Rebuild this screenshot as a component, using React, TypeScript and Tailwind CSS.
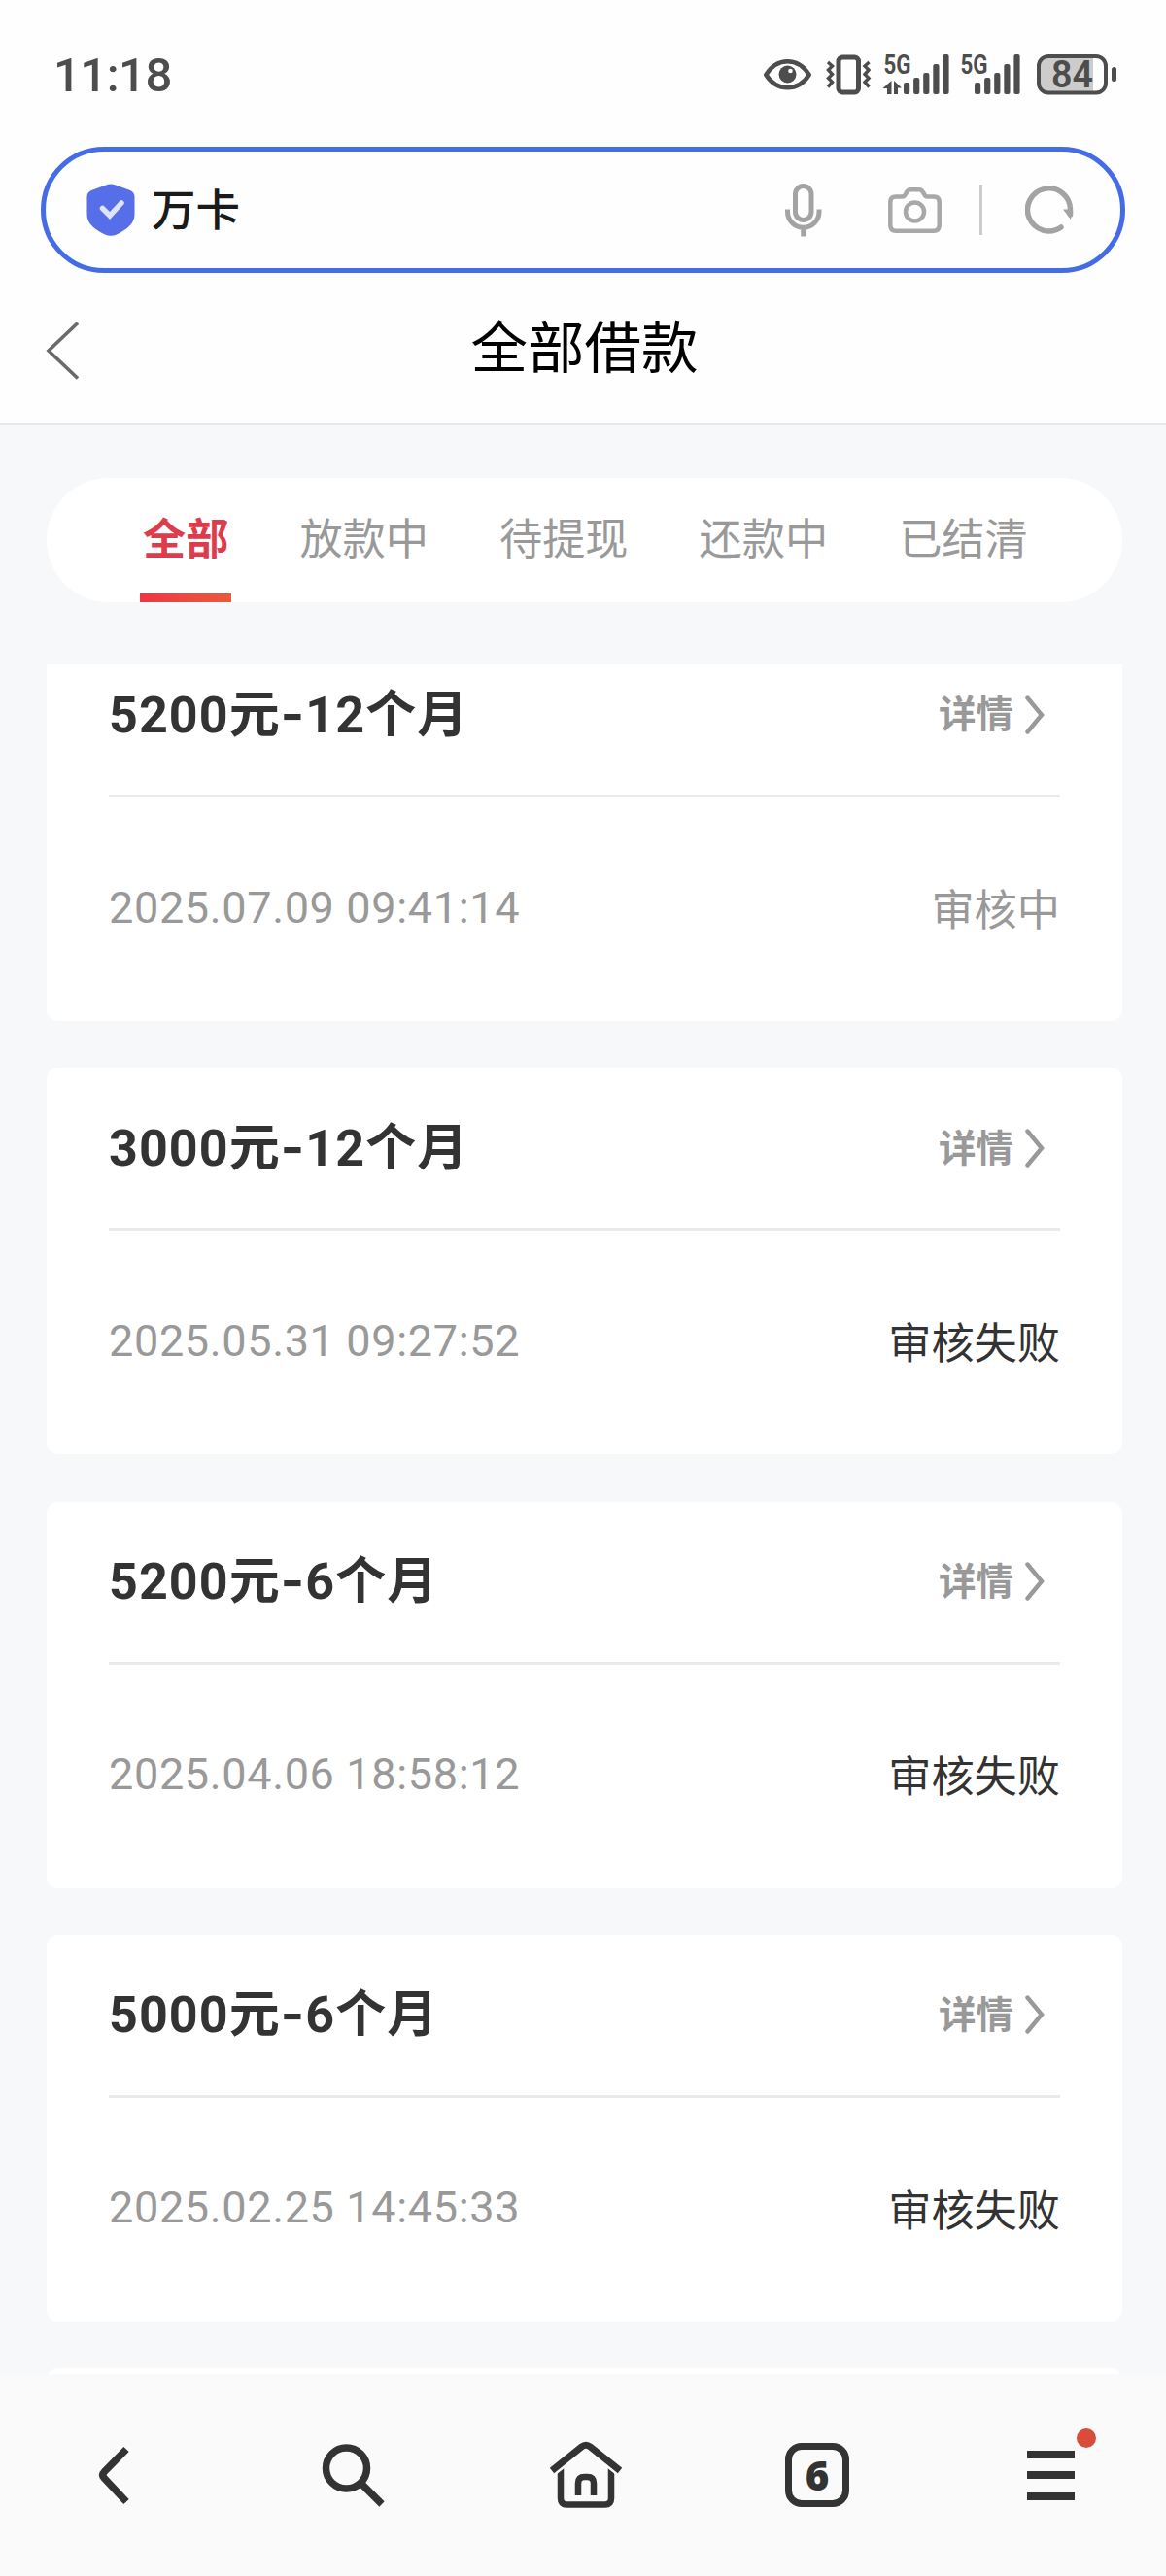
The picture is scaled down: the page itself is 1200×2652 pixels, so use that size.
import React from 'react'

type Loan = {
  amount: string
  months: string
  time: string
  status: string
  pending?: boolean
}

const tabs = ['全部', '放款中', '待提现', '还款中', '已结清']

const loans: Loan[] = [
  { amount: '5200元', months: '12个月', time: '2025.07.09 09:41:14', status: '审核中', pending: true },
  { amount: '3000元', months: '12个月', time: '2025.05.31 09:27:52', status: '审核失败' },
  { amount: '5200元', months: '6个月', time: '2025.04.06 18:58:12', status: '审核失败' },
  { amount: '5000元', months: '6个月', time: '2025.02.25 14:45:33', status: '审核失败' },
]

const barTops = [29, 24, 19, 10, 0]

const Signal = ({ active }: { active?: boolean }) => (
  <svg className="overflow-visible" width="68" height="42" viewBox="0 0 68 42" fill="#4d4d4d">
    <text
      x="0.500"
      y="20"
      fontSize="27"
      fontWeight="700"
      textLength="28"
      lengthAdjust="spacingAndGlyphs"
      fontFamily="Roboto, sans-serif"
    >
      5G
    </text>
    {barTops.map((top, i) => (
      <rect key={top} x={(active ? 21 : 15) + i * 10.1} y={top} width="6.2" height={41 - top} rx="2" />
    ))}
    {active && <path d="M8.500 27v14h-4.500v-6H-.5zM11 27l8 7.500h-4V41h-4z" />}
  </svg>
)

const StatusBar = () => (
  <div className="flex h-[151px] items-center pt-[3px] pl-[55px] text-[#4d4d4d]">
    <span className="w-[731px] text-[49px] leading-none font-medium tracking-[-0.500px]">11:18</span>

    <svg width="49" height="32" viewBox="0 0 49 32" fill="none">
      <path
        d="M2.300 16C8 7 16 2.300 24.500 2.300S41 7 46.700 16C41 25 33 29.200 24.500 29.200S8 25 2.300 16z"
        stroke="#4d4d4d"
        strokeWidth="4.600"
        strokeLinejoin="round"
      />
      <circle cx="24.500" cy="15.500" r="9" fill="#4d4d4d" />
      <circle cx="27.500" cy="12" r="2.300" fill="#fff" />
    </svg>

    <svg className="ml-[15px]" width="47" height="42" viewBox="0 0 47 42" fill="none" stroke="#4d4d4d">
      <rect x="13" y="3" width="20.500" height="36" rx="4" strokeWidth="5" />
      <path
        d="M2 8l4.500 4-4 4 4 4.500-4 4 4 4-4.500 5M44.500 8L40 12l4 4-4 4.500 4 4-4 4 4.500 5"
        strokeWidth="3.400"
      />
    </svg>

    <div className="ml-3 flex gap-[11px]">
      <Signal active />
      <Signal />
    </div>

    <svg className="ml-[11px] overflow-visible" width="83" height="42" viewBox="0 0 83 42">
      <path d="M12 3h46v36H12a9 9 0 0 1-9-9V12a9 9 0 0 1 9-9z" fill="#ccc" />
      <rect x="2" y="2" width="69" height="37.500" rx="10" fill="none" stroke="#4d4d4d" strokeWidth="4" />
      <rect x="77" y="13" width="5" height="15" rx="2.500" fill="#4d4d4d" />
      <text
        x="15"
        y="34"
        fontSize="38"
        fontWeight="600"
        textLength="43"
        lengthAdjust="spacingAndGlyphs"
        fontFamily="Roboto, sans-serif"
        fill="#4d4d4d"
      >
        84
      </text>
    </svg>
  </div>
)

const SearchBar = () => (
  <div className="mx-[42px] flex h-[130px] items-center rounded-full border-[5px] border-[#446ce6] pl-[42px]">
    <svg width="50" height="54" viewBox="0 0 50 54" fill="none">
      <path
        d="M20 1.500Q25 -.5 30 1.500L45 7Q49.500 9 49.500 14V32C49.500 42 40 48 31 52.500Q25 55 19 52.500C10 48 .5 42 .5 32V14Q.5 9 5 7z"
        fill="#566ee8"
      />
      <path d="M16.500 25.500l7.500 7.500 12-13" stroke="#dfe4fb" strokeWidth="5.500" strokeLinecap="round" />
    </svg>
    <span className="mt-[3px] ml-[17px] text-[45.500px] leading-none font-medium text-[#1a1a1a]">万卡</span>

    <div className="ml-auto flex items-center pr-[48px]">
      <svg width="38" height="55" viewBox="0 0 38 55" fill="none" stroke="#a3a3a3" strokeWidth="5">
        <rect x="10.500" y="2.500" width="16.500" height="35" rx="8.250" />
        <path d="M2.500 26.500v2.500a16.250 16.250 0 0 0 32.500 0v-2.500M18.750 45v9.500" />
      </svg>
      <svg className="ml-[68px]" width="55" height="47" viewBox="0 0 55 47" fill="none" stroke="#a8a8a8" strokeWidth="4.500">
        <path
          d="M8 9.500h6.500q2 0 3-2l1.500-2.500q1.500-2.700 4-2.700h9q2.500 0 4 2.700l1.500 2.500q1 2 3 2H47q5.700 0 5.700 5.700V39q0 5.700-5.700 5.700H8Q2.300 44.700 2.300 39V15.200Q2.300 9.500 8 9.500z"
        />
        <circle cx="27.500" cy="25" r="9.500" />
      </svg>
      <div className="ml-[39px] h-[52px] w-[3px] bg-[#ccc]" />
      <svg className="ml-[44px]" width="50" height="50" viewBox="0 0 50 50" fill="none">
        <path d="M37 43A22 22 0 1 1 46.500 25v5" stroke="#a3a3a3" strokeWidth="5.500" strokeLinecap="round" />
        <path d="M39 24.500h9.500L47 35z" fill="#a3a3a3" />
      </svg>
    </div>
  </div>
)

const PageHeader = () => (
  <header className="grid h-[157px] grid-cols-[1fr_auto_1fr] items-center border-b-[3px] border-[#e7e9ec]">
    <svg className="mt-[6px] ml-[47px]" width="34" height="60" viewBox="0 0 34 60" fill="none" stroke="#6a6a6a" strokeWidth="3.600">
      <path d="M33 1.500L3 30l30 28.500" />
    </svg>
    <h1 className="mt-[3px] ml-[3px] text-[58.500px] leading-none text-black">全部借款</h1>
  </header>
)

const TabBar = () => (
  <nav className="mt-[54px] mr-[45px] ml-12 flex h-32 gap-[73px] rounded-full bg-white pl-[99px] text-[44.200px] text-[#999]">
    {tabs.map((tab, i) =>
      i === 0 ? (
        <div key={tab} className="relative flex items-center font-bold text-[#dc3c4c]">
          {tab}
          <span className="absolute -right-[3px] bottom-0 -left-[3px] h-[9px] bg-linear-to-r from-[#ee3544] to-[#ea5a3a]" />
        </div>
      ) : (
        <div key={tab} className="flex items-center">
          {tab}
        </div>
      )
    )}
  </nav>
)

const LoanCard = ({ loan }: { loan: Loan }) => (
  <section className="h-[398px] shrink-0 rounded-xl bg-white px-16">
    <div className="flex h-[168px] items-center justify-between border-b-[3px] border-[#eaeaea]">
      <h2 className="mt-[1px] text-[52px] leading-none font-bold tracking-[1.100px] text-[#333]">
        {loan.amount}
        <span className="font-['Inter']">-</span>
        {loan.months}
      </h2>
      <div className="flex items-center gap-3 pr-4 text-[38.500px] leading-none font-bold text-[#999]">
        <span className="mt-[2px]">详情</span>
        <svg width="20" height="40" viewBox="0 0 20 40" fill="none" stroke="#999" strokeWidth="4.400" strokeLinecap="round">
          <path d="M2.500 2.500L17 20 2.500 37.500" />
        </svg>
      </div>
    </div>
    <div className="flex h-[230px] items-center justify-between text-[44.200px] leading-none text-[#999]">
      <time className="mb-[4px] text-[45px] tracking-[0.650px]">{loan.time}</time>
      <span className={loan.pending ? 'mt-[4px] text-[#999]' : 'mt-[4px] text-[#333]'}>{loan.status}</span>
    </div>
  </section>
)

const BottomNav = () => (
  <footer className="grid h-[208px] grid-cols-5 place-items-center bg-[#fafafa]">
    <svg width="80" height="80" viewBox="0 0 80 80" fill="none" stroke="#333" strokeWidth="7.500">
      <path d="M50 13.500L27.500 36.500Q24 40 27.500 43.500L50 67.500" />
    </svg>
    <svg width="80" height="80" viewBox="0 0 80 80" fill="none" stroke="#333" strokeWidth="7.500">
      <circle cx="36.500" cy="33" r="21" />
      <path d="M52 49l21 21" />
    </svg>
    <svg width="80" height="80" viewBox="0 0 80 80" fill="none" stroke="#333" strokeWidth="6.500">
      <path d="M17 30v34q0 6.500 6.500 6.500h39q6.500 0 6.500-6.500V30" />
      <path d="M4 38.500L38.500 11.500Q43 8 47.500 11.500L82 38.500" stroke="#fafafa" strokeWidth="12" />
      <path d="M8 35.500L38.500 11Q43 7.500 47.500 11L78 35.500" strokeWidth="7" />
      <path d="M35 61V48.500q0-6.500 6.500-6.500h3q6.500 0 6.500 6.500V61" />
    </svg>
    <div className="ml-[2px] flex size-[66px] items-center justify-center rounded-[17px] border-[7px] border-[#333] font-['Open_Sans'] text-[42px] leading-none font-extrabold text-[#333]">
      6
    </div>
    <div className="relative ml-[2px] flex w-[49px] flex-col gap-[13.500px]">
      <span className="h-[8px] bg-[#333]" />
      <span className="h-[8px] bg-[#333]" />
      <span className="h-[8px] bg-[#333]" />
      <span className="absolute -top-[23px] -right-[22px] size-5 rounded-full bg-[#d84c3c]" />
    </div>
  </footer>
)

const App = () => (
  <div className="flex h-[2652px] w-[1200px] flex-col overflow-hidden bg-[#f7f8fa] font-['Roboto','Noto_Sans_CJK_SC',sans-serif]">
    <div className="bg-[#fefefe]">
      <StatusBar />
      <SearchBar />
      <PageHeader />
    </div>
    <TabBar />
    <main className="mt-16 mr-[45px] ml-12 h-[1760px] overflow-hidden">
      <div className="-mt-[31px] flex flex-col gap-[48.300px]">
        {loans.map((loan) => (
          <LoanCard key={loan.time} loan={loan} />
        ))}
        <section className="h-[398px] shrink-0 rounded-xl bg-white" />
      </div>
    </main>
    <BottomNav />
  </div>
)

export default App
